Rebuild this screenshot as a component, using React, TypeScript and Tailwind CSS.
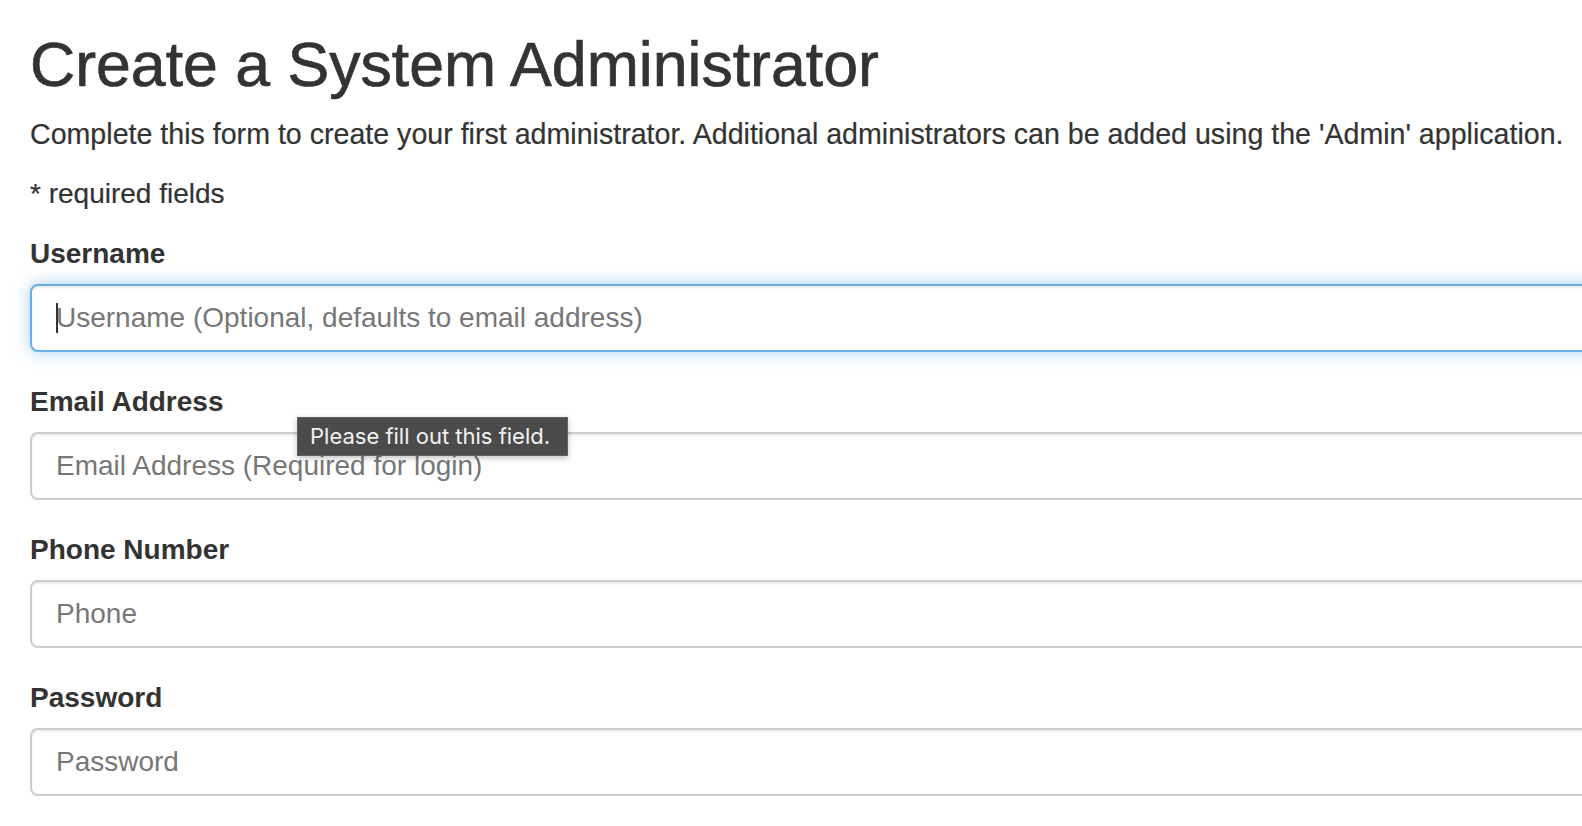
const fields = [
    { label: 'Username', placeholder: 'Username (Optional, defaults to email address)', focused: true },
    { label: 'Email Address', placeholder: 'Email Address (Required for login)' },
    { label: 'Phone Number', placeholder: 'Phone' },
    { label: 'Password', placeholder: 'Password' },
];

const App = () => {
    return <div className="relative h-[826px] w-[1582px] overflow-hidden bg-white font-['Liberation_Sans',Arial,sans-serif] text-[#333]">
        <div className="pl-[30px] pt-[30px]">
            <h1 className="text-[62.6px] leading-[68px] mb-[16px] font-normal [-webkit-text-stroke:0.7px_#333]">Create a System Administrator</h1>
            <p className="text-[28.6px] leading-[40px] mb-[20px] [-webkit-text-stroke:0.2px_#333]">
                Complete this form to create your first administrator. Additional administrators can be added using the 'Admin' application.
            </p>
            <p className="text-[28px] leading-[40px] mb-[20px] [-webkit-text-stroke:0.2px_#333]">* required fields</p>

            <form>
                {fields.map(f => (
                    <div key={f.label} className="mb-[30px]">
                        <label className="block text-[28px] leading-[40px] mb-[10px] font-bold">{f.label}</label>
                        <div className="relative">
                            <input
                                type="text"
                                placeholder={f.placeholder}
                                className={
                                    f.focused
                                        ? "block w-[1600px] h-[68px] px-[24px] rounded-[8px] border-2 border-[#66afe9] bg-white text-[28px] outline-none placeholder:text-[#777] shadow-[inset_0_2px_2px_rgba(0,0,0,0.075),0_0_16px_rgba(102,175,233,0.6)]"
                                        : "block w-[1600px] h-[68px] px-[24px] rounded-[8px] border-2 border-[#ccc] bg-white text-[28px] outline-none placeholder:text-[#777] shadow-[inset_0_2px_2px_rgba(0,0,0,0.075)]"
                                }
                            />
                            {f.focused && <span className="absolute left-[26px] top-[19px] h-[30px] w-[2px] bg-[#333]"></span>}
                        </div>
                    </div>
                ))}
            </form>
        </div>

        {/* browser validation bubble */}
        <div className="absolute left-[297px] top-[417px] h-[39px] w-[271px] flex items-center pl-[12px] bg-[#4b4b4b] border border-[#626262] shadow-[0_2px_6px_rgba(0,0,0,0.25)] text-[#f2f2f2] text-[22px] font-['Inter',sans-serif] whitespace-nowrap">
            Please fill out this field.
        </div>
    </div>
}

export default App;
